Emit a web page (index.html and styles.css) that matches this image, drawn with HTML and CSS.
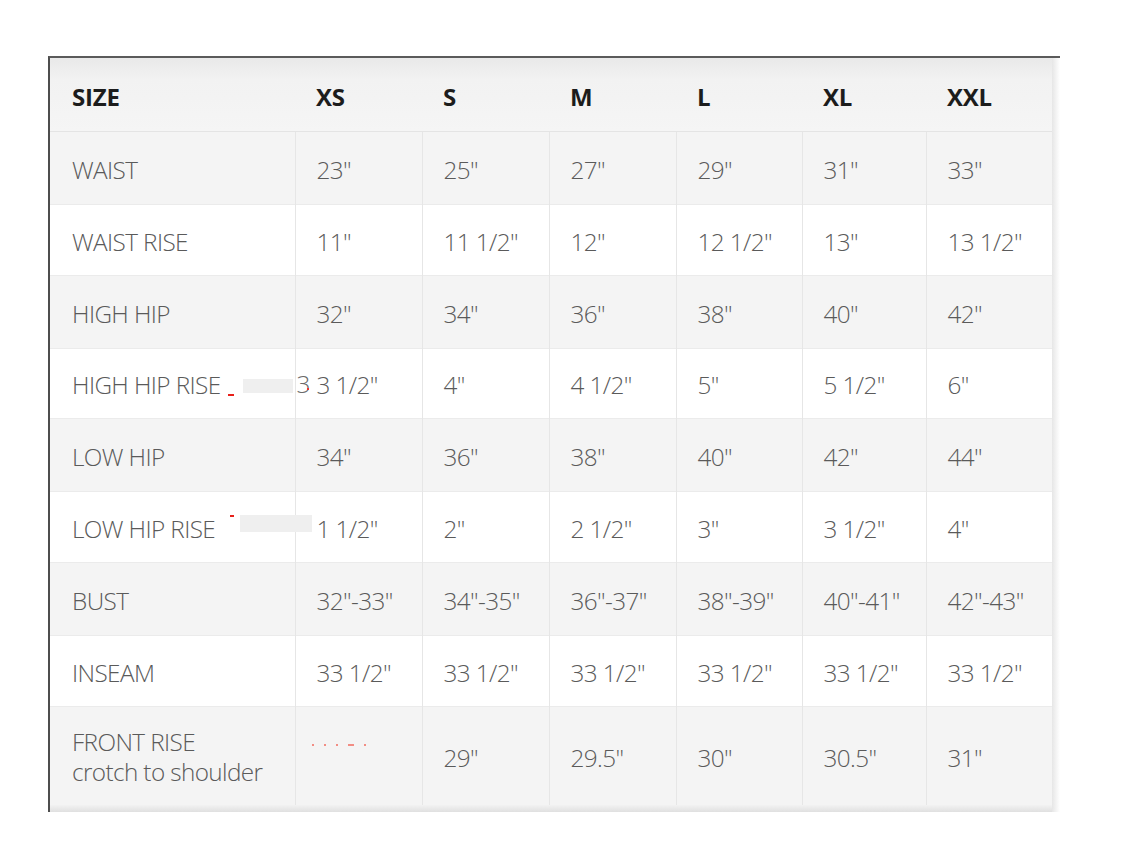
FILE: index.html
```html
<!DOCTYPE html>
<html>
<head>
<meta charset="utf-8">
<link rel="stylesheet" href="styles.css">
</head>
<body>
<div class="frame">
  <table class="chart">
    <colgroup>
      <col class="c0"><col class="c1"><col class="c2"><col class="c3"><col class="c4"><col class="c5"><col class="c6">
    </colgroup>
    <thead>
      <tr class="head">
        <th>SIZE</th><th>XS</th><th>S</th><th>M</th><th>L</th><th>XL</th><th>XXL</th>
      </tr>
    </thead>
    <tbody>
      <tr class="r73 alt"><td>WAIST</td><td>23"</td><td>25"</td><td>27"</td><td>29"</td><td>31"</td><td>33"</td></tr>
      <tr class="r71"><td>WAIST RISE</td><td>11"</td><td>11 1/2"</td><td>12"</td><td>12 1/2"</td><td>13"</td><td>13 1/2"</td></tr>
      <tr class="r73 alt"><td>HIGH HIP</td><td>32"</td><td>34"</td><td>36"</td><td>38"</td><td>40"</td><td>42"</td></tr>
      <tr class="r70"><td class="mark">HIGH HIP RISE<span class="dash d1"></span><span class="blot b1"></span></td><td class="mark"><span class="ghost">3</span><span class="dot"></span>3 1/2"</td><td>4"</td><td>4 1/2"</td><td>5"</td><td>5 1/2"</td><td>6"</td></tr>
      <tr class="r73 alt"><td>LOW HIP</td><td>34"</td><td>36"</td><td>38"</td><td>40"</td><td>42"</td><td>44"</td></tr>
      <tr class="r71"><td class="mark">LOW HIP RISE<span class="dash d2"></span><span class="blot b2"></span></td><td>1 1/2"</td><td>2"</td><td>2 1/2"</td><td>3"</td><td>3 1/2"</td><td>4"</td></tr>
      <tr class="r73 alt"><td>BUST</td><td>32"-33"</td><td>34"-35"</td><td>36"-37"</td><td>38"-39"</td><td>40"-41"</td><td>42"-43"</td></tr>
      <tr class="r71"><td>INSEAM</td><td>33 1/2"</td><td>33 1/2"</td><td>33 1/2"</td><td>33 1/2"</td><td>33 1/2"</td><td>33 1/2"</td></tr>
      <tr class="r99 alt"><td class="two">FRONT RISE<br>crotch to shoulder</td><td class="mark"><span class="specks"><i></i><i></i><i></i><i class="w"></i><i></i></span></td><td>29"</td><td>29.5"</td><td>30"</td><td>30.5"</td><td>31"</td></tr>
    </tbody>
  </table>
</div>
</body>
</html>
```

FILE: styles.css
```css
html, body {
  margin: 0;
  padding: 0;
  background: #ffffff;
}

.frame {
  margin: 56px 0 0 48px;
  width: 1012px;
  border-top: 2px solid #5b5b5b;
  border-left: 2px solid #4e4e4e;
  padding-bottom: 7px;
  background:
    linear-gradient(to right, #e6e6e6, #ffffff) right top / 8px 100% no-repeat,
    linear-gradient(to bottom, #f2f2f2, #e0e0e0) left bottom / 1002px 7px no-repeat;
  box-sizing: border-box;
}

.chart {
  width: 1002px;
  border-collapse: collapse;
  table-layout: fixed;
  font-family: "Open Sans", "Liberation Sans", sans-serif;
}

.c0 { width: 245px; }
.c1 { width: 127px; }
.c2 { width: 127px; }
.c3 { width: 127px; }
.c4 { width: 126px; }
.c5 { width: 124px; }
.c6 { width: 126px; }

.head {
  height: 73px;
  background: linear-gradient(to bottom, #e9e9e9 0%, #f2f2f2 30%, #f5f5f5 100%);
}

.head th {
  text-align: left;
  font-weight: 700;
  font-size: 24px;
  letter-spacing: -0.2px;
  color: #1c1c1c;
  padding: 4px 0 0 21px;
  border-bottom: 1px solid #e4e4e4;
}

.head th:first-child {
  padding-left: 22px;
}

.chart td {
  font-weight: 300;
  font-size: 24.3px;
  letter-spacing: -0.6px;
  color: #5a5a5a;
  padding: 3px 0 0 21px;
  border-top: 1px solid #ebebeb;
  border-left: 1px solid #e6e6e6;
  white-space: nowrap;
  vertical-align: middle;
}

.chart td:first-child {
  border-left: none;
  padding-left: 22px;
}

.alt { background: #f4f4f4; }

.r70 { height: 70px; }
.r71 { height: 71px; }
.r73 { height: 73px; }
.r99 { height: 99px; }

.two {
  line-height: 30px;
}

.mark {
  position: relative;
}

.blot {
  position: absolute;
  background: #efefef;
}

.b1 { left: 193px; top: 30px; width: 50px; height: 14px; }
.b2 { left: 190px; top: 23px; width: 72px; height: 17px; z-index: 2; }

.dash {
  position: absolute;
  background: #e8201a;
  height: 2px;
}

.d1 { left: 178px; top: 45px; width: 6px; }
.d2 { left: 180px; top: 23px; width: 4px; }

.ghost {
  position: absolute;
  left: 1px;
  top: 50%;
  color: #6a6a6a;
  transform: translateY(-47%);
}

.dot {
  position: absolute;
  left: 11px;
  top: 39px;
  width: 2px;
  height: 2px;
  background: #e33;
}

.specks {
  position: absolute;
  left: 16px;
  top: 37px;
  display: flex;
  gap: 10px;
  opacity: 0.6;
}

.specks i {
  display: block;
  width: 2px;
  height: 2px;
  background: #f24a3a;
}

.specks i.w {
  width: 6px;
}
```
